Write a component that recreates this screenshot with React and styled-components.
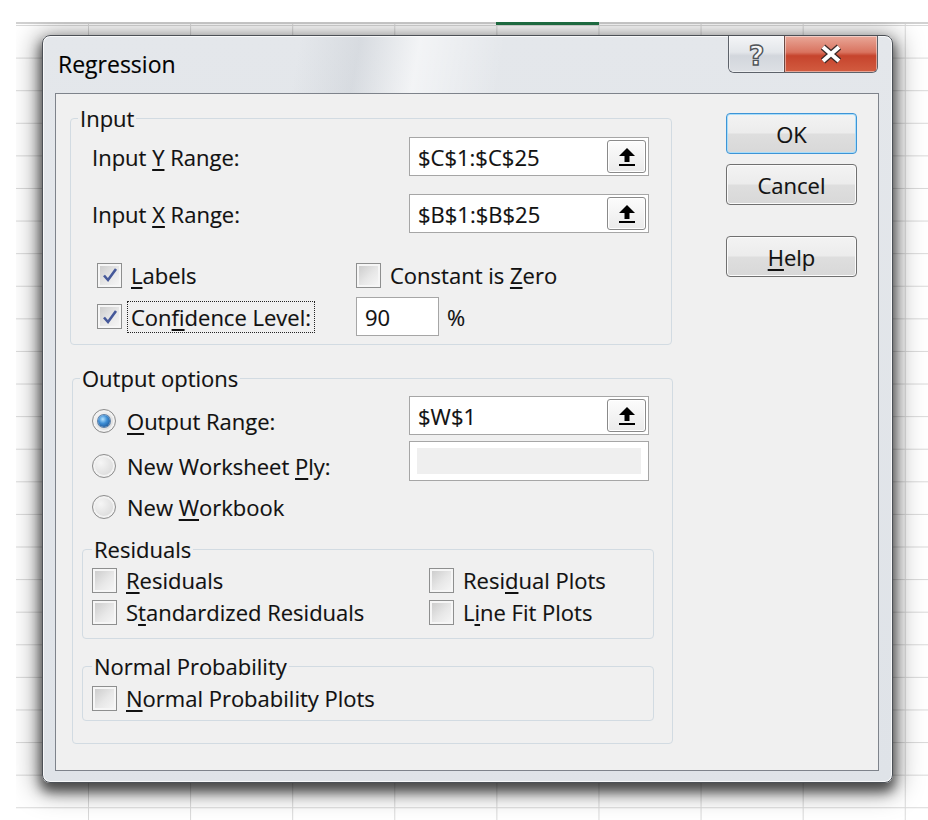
import React from "react";
import styled, { createGlobalStyle } from "styled-components";

const GlobalStyle = createGlobalStyle`
  html, body {
    margin: 0;
    padding: 0;
    background: #fff;
  }
  body {
    font-family: "Open Sans", "Noto Sans", "DejaVu Sans", sans-serif;
    color: #111;
  }
  * {
    box-sizing: border-box;
  }
`;

// spreadsheet behind the dialog
const Sheet = styled.div`
  margin: 22px 0 0 16px;
  height: 798px;
  padding: 13px 0 0 26px;
  overflow: hidden;
  background-color: #fff;
  background-image: linear-gradient(#217346, #217346),
    linear-gradient(#d2d2d2, #d2d2d2),
    linear-gradient(to right, #d9d9d9 1px, transparent 1px),
    linear-gradient(to bottom, #d9d9d9 1px, transparent 1px);
  background-size: 103px 3px, 100% 2px, 102.1px 100%, 100% 32.6px;
  background-position: 480px 0, 0 0, 72px 0, 0 3px;
  background-repeat: no-repeat, no-repeat, repeat-x, repeat-y;
`;

const Dialog = styled.div`
  width: 851px;
  height: 748px;
  display: flex;
  flex-direction: column;
  border: 1px solid #4c5056;
  border-radius: 8px;
  overflow: hidden;
  font-size: 22px;
  line-height: 26px;
  -webkit-text-stroke: 0.15px #111;
  background: linear-gradient(
        100deg,
        transparent 30%,
        rgba(170, 177, 186, 0.22) 37%,
        rgba(255, 255, 255, 0.55) 44%,
        transparent 54%
      )
      0 0 / 100% 58px no-repeat,
    linear-gradient(#e4e7eb, #dfe3e8);
  box-shadow: inset 0 0 0 1px rgba(255, 255, 255, 0.75),
    0 7px 12px 2px rgba(0, 0, 0, 0.6), 0 4px 26px 6px rgba(0, 0, 0, 0.35);
`;

const TitleBar = styled.div`
  height: 57px;
  flex: none;
  display: flex;
  align-items: flex-start;
  padding: 0 14px 0 15px;
`;

const Title = styled.div`
  flex: 1;
  font-size: 23px;
  line-height: 57px;
  color: #000;
`;

const CaptionButtons = styled.div`
  display: flex;
  height: 37px;
  border: 1px solid #5d626a;
  border-top: none;
  border-radius: 0 0 6px 6px;
  overflow: hidden;
`;

const CaptionButton = styled.div`
  width: ${({ $close }) => ($close ? 93 : 55)}px;
  display: flex;
  align-items: center;
  justify-content: center;
  border-left: ${({ $close }) => ($close ? "1px solid #6b4a44" : "none")};
  background: ${({ $close }) =>
    $close
      ? "linear-gradient(#e9a899 0%, #d9735f 45%, #c6442d 55%, #d25c40 100%)"
      : "linear-gradient(#f4f5f7 0%, #e3e6ea 45%, #d2d6dc 55%, #dde0e4 100%)"};
  box-shadow: inset 0 0 0 1px rgba(255, 255, 255, 0.45);
`;

const HelpGlyph = styled.span`
  font-family: "DejaVu Sans", sans-serif;
  font-weight: bold;
  font-size: 27px;
  line-height: 1;
  margin-top: 2px;
  color: #f6f6f6;
  -webkit-text-stroke: 1.4px #505459;
`;

const Client = styled.div`
  flex: 1;
  margin: 0 13px 11px 12px;
  border: 1px solid #7e838b;
  background: #f0f0f0;
  display: flex;
  align-items: flex-start;
  padding: 11px 0 0 14px;
`;

const LeftColumn = styled.div`
  width: 603px;
  display: flex;
  flex-direction: column;
  gap: 20px;
`;

const RightColumn = styled.div`
  margin: 8px 0 0 53px;
  display: flex;
  flex-direction: column;
`;

const PushButton = styled.button`
  width: 131px;
  height: 41px;
  margin-top: ${({ $gap }) => $gap || 0}px;
  padding: 0;
  font: inherit;
  font-size: 22px;
  color: #111;
  border: 1px solid ${({ $default }) => ($default ? "#3d94d6" : "#707070")};
  border-radius: 4px;
  background: linear-gradient(#f3f3f3 0%, #ececec 48%, #dedede 52%, #d8d8d8 100%);
  box-shadow: inset 0 0 0 1px
    ${({ $default }) => ($default ? "#a9ddf9" : "#fbfbfb")};
`;

const Group = styled.fieldset`
  margin: ${({ $margin }) => $margin || "0"};
  width: ${({ $width }) => $width}px;
  padding: 0;
  min-width: 0;
  border: 1px solid #d2dbe2;
  border-radius: 4px;
`;

const Legend = styled.legend`
  margin-left: ${({ $indent }) => $indent}px;
  padding: 0 2px;
  font-size: 22px;
  line-height: 26px;
`;

const GroupBody = styled.div`
  padding: ${({ $pad }) => $pad};
  display: flex;
  flex-direction: column;
`;

const RangeRow = styled.div`
  display: flex;
  align-items: center;
  margin-top: ${({ $gap }) => $gap || 0}px;
`;

const RangeLabel = styled.span`
  width: 317px;
  white-space: nowrap;
`;

const Field = styled.div`
  width: ${({ $width }) => $width || 240}px;
  height: ${({ $height }) => $height || 39}px;
  flex: none;
  display: flex;
  align-items: center;
  justify-content: space-between;
  padding: 0 2px 0 8px;
  border: 1px solid #a6a6a6;
  background: ${({ $disabled }) => ($disabled ? "#efefef" : "#fff")};
  box-shadow: ${({ $disabled }) =>
    $disabled
      ? "inset 7px 0 0 #fff, inset -7px 0 0 #fff, inset 0 6px 0 #fff, inset 0 -6px 0 #fff"
      : "none"};
`;

const RefButton = styled.span`
  width: 39px;
  height: 33px;
  display: flex;
  align-items: center;
  justify-content: center;
  border: 1px solid #8a8a8a;
  border-radius: 3px;
  background: linear-gradient(#fcfcfc, #ebebeb);
  box-shadow: inset 0 0 0 1px #fff;
`;

const CheckGrid = styled.div`
  display: grid;
  grid-template-columns: ${({ $first }) => $first}px auto;
  grid-auto-rows: ${({ $rows }) => $rows || "32px"};
  grid-template-rows: ${({ $rows }) => $rows || "none"};
  row-gap: ${({ $rowGap }) => $rowGap || 0}px;
  align-items: center;
  margin-top: ${({ $gap }) => $gap || 0}px;
  padding-left: ${({ $indent }) => $indent || 0}px;
`;

const OptionGrid = styled.div`
  display: grid;
  grid-template-columns: 317px 240px;
  grid-template-rows: 39px 40px 32px;
  row-gap: 6px;
  align-items: start;
  padding-left: 10px;
`;

const Option = styled.label`
  display: flex;
  align-items: center;
  gap: ${({ $gap }) => $gap || 5}px;
  margin-top: ${({ $top }) => $top || 0}px;
`;

const Caption = styled.span`
  padding: 2px 3px;
  border: 1px dotted ${({ $focused }) => ($focused ? "#222" : "transparent")};
  white-space: nowrap;
`;

const Key = styled.span`
  text-decoration: underline;
  text-decoration-thickness: 2px;
  text-underline-offset: 3px;
`;

const Box = styled.span`
  width: 25px;
  height: 25px;
  flex: none;
  display: flex;
  align-items: center;
  justify-content: center;
  border: 1px solid #8e8f8f;
  background: linear-gradient(135deg, #c8c8c8 0%, #e8e8e8 55%, #f8f8f8 100%);
  box-shadow: inset 0 0 0 2px #f6f6f6;
`;

const Radio = styled.span`
  width: 24px;
  height: 24px;
  flex: none;
  border-radius: 50%;
  display: flex;
  align-items: center;
  justify-content: center;
  border: 1px solid #8d8d8d;
  background: radial-gradient(circle at 35% 35%, #f6f6f6 0%, #e2e2e2 55%, #cfcfcf 100%);
  box-shadow: inset 0 0 0 2px #f2f2f2;
`;

const Dot = styled.span`
  width: 12px;
  height: 12px;
  border-radius: 50%;
  background: radial-gradient(circle at 40% 35%, #b4e3ff 0%, #3f8fd6 40%, #0f3f7c 100%);
  box-shadow: 0 0 0 1px #5d7fa6;
`;

const Percent = styled.span`
  margin-left: 8px;
`;

const ConfidenceCell = styled.div`
  display: flex;
  align-items: center;
`;

const UploadIcon = () => (
  <svg width="18" height="20" viewBox="0 0 18 20">
    <polygon points="9,1 17,9 11.5,9 11.5,15 6.5,15 6.5,9 1,9" fill="#000" />
    <rect x="1" y="17" width="16" height="2" fill="#000" />
  </svg>
);

const CloseIcon = () => (
  <svg width="26" height="20" viewBox="0 0 26 20">
    <path d="M5 3 L21 17 M21 3 L5 17" stroke="#3b2b29" strokeWidth="6.6" />
    <path d="M5 3 L21 17 M21 3 L5 17" stroke="#fff" strokeWidth="4" />
  </svg>
);

const CheckMark = () => (
  <svg width="16" height="16" viewBox="0 0 16 16">
    <path
      d="M2 8.5 L6 13 L14 2"
      fill="none"
      stroke="#46599a"
      strokeWidth="2.6"
    />
  </svg>
);

const CheckOption = ({ checked, focused, children, top }) => (
  <Option $top={top}>
    <Box>{checked && <CheckMark />}</Box>
    <Caption $focused={focused}>{children}</Caption>
  </Option>
);

const RadioOption = ({ selected, children, top }) => (
  <Option $gap={7} $top={top}>
    <Radio>{selected && <Dot />}</Radio>
    <Caption>{children}</Caption>
  </Option>
);

const RangeField = ({ value }) => (
  <Field>
    <span>{value}</span>
    <RefButton>
      <UploadIcon />
    </RefButton>
  </Field>
);

export default function App() {
  return (
    <>
      <GlobalStyle />
      <Sheet>
        <Dialog>
          <TitleBar>
            <Title>Regression</Title>
            <CaptionButtons>
              <CaptionButton>
                <HelpGlyph>?</HelpGlyph>
              </CaptionButton>
              <CaptionButton $close>
                <CloseIcon />
              </CaptionButton>
            </CaptionButtons>
          </TitleBar>

          <Client>
            <LeftColumn>
              <Group $width={602}>
                <Legend $indent={7}>Input</Legend>
                <GroupBody $pad="6px 0 8px 21px">
                  <RangeRow>
                    <RangeLabel>
                      Input <Key>Y</Key> Range:
                    </RangeLabel>
                    <RangeField value="$C$1:$C$25" />
                  </RangeRow>
                  <RangeRow $gap={18}>
                    <RangeLabel>
                      Input <Key>X</Key> Range:
                    </RangeLabel>
                    <RangeField value="$B$1:$B$25" />
                  </RangeRow>
                  <CheckGrid
                    $first={259}
                    $rows="32px 39px"
                    $rowGap={6}
                    $gap={26}
                    $indent={5}
                  >
                    <CheckOption checked>
                      <Key>L</Key>abels
                    </CheckOption>
                    <CheckOption>
                      Constant is <Key>Z</Key>ero
                    </CheckOption>
                    <CheckOption checked focused>
                      Con<Key>f</Key>idence Level:
                    </CheckOption>
                    <ConfidenceCell>
                      <Field $width={83}>90</Field>
                      <Percent>%</Percent>
                    </ConfidenceCell>
                  </CheckGrid>
                </GroupBody>
              </Group>

              <Group $width={601} $margin="0 0 0 2px">
                <Legend $indent={7}>Output options</Legend>
                <GroupBody $pad="5px 0 22px 9px">
                  <OptionGrid>
                    <RadioOption selected top={9}>
                      <Key>O</Key>utput Range:
                    </RadioOption>
                    <RangeField value="$W$1" />
                    <RadioOption top={9}>
                      New Worksheet <Key>P</Key>ly:
                    </RadioOption>
                    <Field $disabled $height={40} />
                    <RadioOption top={4}>
                      New <Key>W</Key>orkbook
                    </RadioOption>
                  </OptionGrid>

                  <Group $width={572} $margin="17px 0 0 0">
                    <Legend $indent={9}>Residuals</Legend>
                    <GroupBody $pad="2px 0 10px 9px">
                      <CheckGrid $first={337}>
                        <CheckOption>
                          <Key>R</Key>esiduals
                        </CheckOption>
                        <CheckOption>
                          Resi<Key>d</Key>ual Plots
                        </CheckOption>
                        <CheckOption>
                          S<Key>t</Key>andardized Residuals
                        </CheckOption>
                        <CheckOption>
                          L<Key>i</Key>ne Fit Plots
                        </CheckOption>
                      </CheckGrid>
                    </GroupBody>
                  </Group>

                  <Group $width={572} $margin="14px 0 0 0">
                    <Legend $indent={9}>Normal Probability</Legend>
                    <GroupBody $pad="3px 0 6px 9px">
                      <CheckOption>
                        <Key>N</Key>ormal Probability Plots
                      </CheckOption>
                    </GroupBody>
                  </Group>
                </GroupBody>
              </Group>
            </LeftColumn>

            <RightColumn>
              <PushButton $default>OK</PushButton>
              <PushButton $gap={10}>Cancel</PushButton>
              <PushButton $gap={31}>
                <Key>H</Key>elp
              </PushButton>
            </RightColumn>
          </Client>
        </Dialog>
      </Sheet>
    </>
  );
}
